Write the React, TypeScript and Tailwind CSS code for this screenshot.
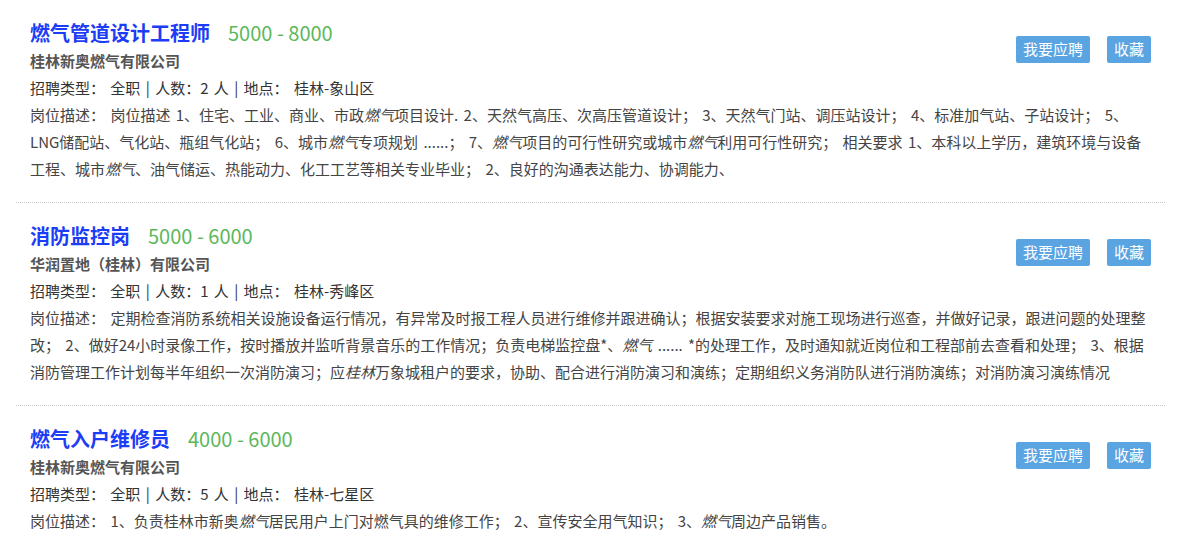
// Job search results list.
type Job = {
  title: string;
  salary: string;
  company: string;
  count: number;
  place: string;
  desc: React.ReactNode;
};

const Em = ({ children }: { children: React.ReactNode }) => <em className="italic">{children}</em>;

const jobs: Job[] = [
  {
    title: "燃气管道设计工程师",
    salary: "5000 - 8000",
    company: "桂林新奥燃气有限公司",
    count: 2,
    place: "桂林-象山区",
    desc: (
      <>
        岗位描述 1、住宅、工业、商业、市政<Em>燃气</Em>项目设计. 2、天然气高压、次高压管道设计； 3、天然气门站、调压站设计； 4、标准加气站、子站设计； 5、LNG储配站、气化站、瓶组气化站； 6、城市<Em>燃气</Em>专项规划 ......； 7、<Em>燃气</Em>项目的可行性研究或城市<Em>燃气</Em>利用可行性研究； 相关要求 1、本科以上学历，建筑环境与设备工程、城市<Em>燃气</Em>、油气储运、热能动力、化工工艺等相关专业毕业； 2、良好的沟通表达能力、协调能力、
      </>
    ),
  },
  {
    title: "消防监控岗",
    salary: "5000 - 6000",
    company: "华润置地（桂林）有限公司",
    count: 1,
    place: "桂林-秀峰区",
    desc: (
      <>
        定期检查消防系统相关设施设备运行情况，有异常及时报工程人员进行维修并跟进确认；根据安装要求对施工现场进行巡查，并做好记录，跟进问题的处理整改； 2、做好24小时录像工作，按时播放并监听背景音乐的工作情况；负责电梯监控盘*、<Em>燃气</Em> ...... *的处理工作，及时通知就近岗位和工程部前去查看和处理； 3、根据消防管理工作计划每半年组织一次消防演习；应<Em>桂林</Em>万象城租户的要求，协助、配合进行消防演习和演练；定期组织义务消防队进行消防演练；对消防演习演练情况
      </>
    ),
  },
  {
    title: "燃气入户维修员",
    salary: "4000 - 6000",
    company: "桂林新奥燃气有限公司",
    count: 5,
    place: "桂林-七星区",
    desc: (
      <>
        1、负责桂林市新奥<Em>燃气</Em>居民用户上门对燃气具的维修工作； 2、宣传安全用气知识； 3、<Em>燃气</Em>周边产品销售。
      </>
    ),
  },
];

function JobRow({ job, last }: { job: Job; last: boolean }) {
  return (
    <div className={`px-[14px] pt-[19px] pb-[20px] ${last ? "" : "border-b border-dotted border-[#c8c8c8]"}`}>
      <div className="flex justify-between">
        <div>
          <div className="flex items-baseline h-7 leading-7">
            <span className="text-[20px] font-bold text-[#1d3cf5]">{job.title}</span>
            <span className="ml-[18px] text-[20px] text-[#5bb85a]">{job.salary}</span>
          </div>
          <div className="text-[15px] font-bold leading-[27px] text-[#555]">{job.company}</div>
        </div>
        <div className="mt-[17px] flex gap-[17px]">
          <button className="h-[27px] rounded-[2px] bg-[#5ba4e2] px-[7px] text-[15px] text-white">我要应聘</button>
          <button className="h-[27px] rounded-[2px] bg-[#5ba4e2] px-[7px] text-[15px] text-white">收藏</button>
        </div>
      </div>
      <div className="text-[15px] leading-[27px] text-[#333] [word-spacing:2px]">
        招聘类型： 全职 | 人数：{job.count} 人 | 地点： {job.place}
      </div>
      <div className="text-[15px] leading-[27px] text-[#444] [word-spacing:2px]">
        岗位描述： {job.desc}
      </div>
    </div>
  );
}

export default function App() {
  return (
    <div className="min-h-screen bg-white font-['Noto_Sans_CJK_SC',sans-serif]">
      <div className="mx-4">
        {jobs.map((j, i) => (
          <JobRow key={j.title} job={j} last={i === jobs.length - 1} />
        ))}
      </div>
    </div>
  );
}
